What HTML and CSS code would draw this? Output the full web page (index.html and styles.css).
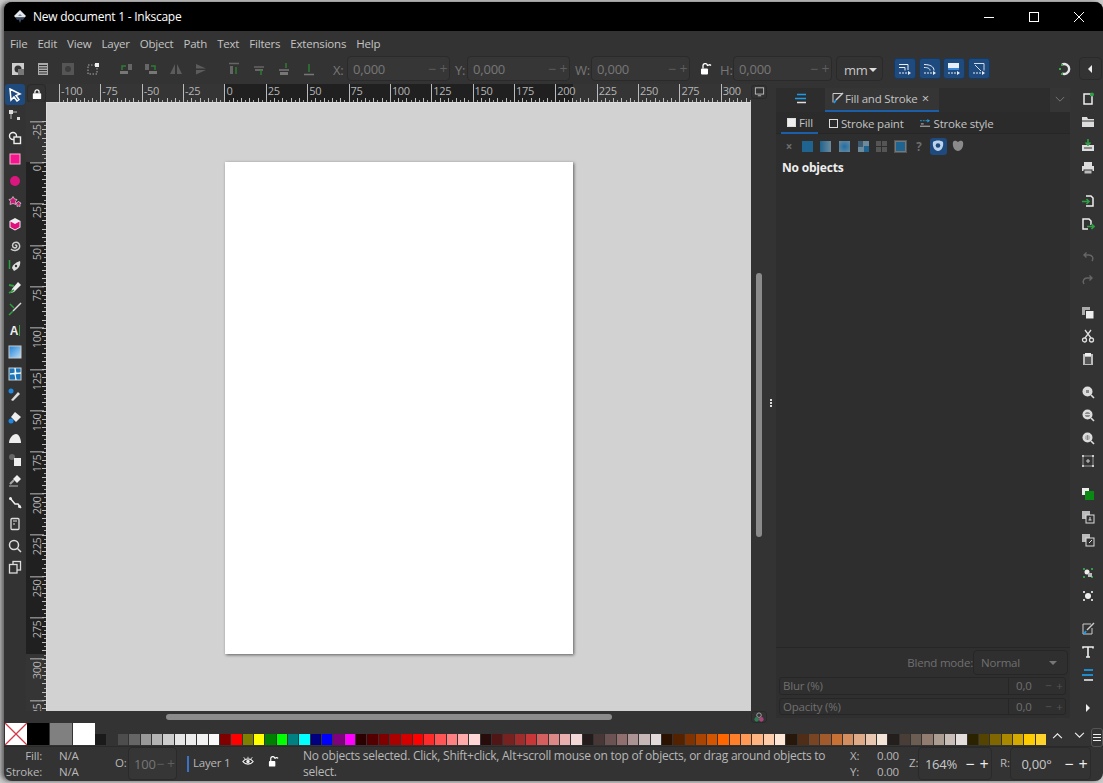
FILE: index.html
```html
<!DOCTYPE html>
<html lang="en">
<head>
    <meta charset="UTF-8">
    <title>New document 1 - Inkscape</title>
    <link rel="stylesheet" href="styles.css">
</head>
<body>
<svg class="defs" width="0" height="0">
    <symbol id="mag" viewBox="0 0 14 14"><circle cx="6.5" cy="6.5" r="5" fill="#ddd"/><circle cx="6.5" cy="6.5" r="2.6" fill="#888"/><path d="M10 10l3 3" stroke="#ddd" stroke-width="1.6"/></symbol>
</svg>
<div class="window">
    <div class="titlebar">
        <svg class="app-logo" viewBox="0 0 14 14" width="14" height="14"><path d="M7 0l6 6-1.500 1.500H2.500L1 6z" fill="#e4e7ec"/><path d="M2.500 7.500h9L10 10l-1.500-.5L7 13l-1.500-3.500L4 10z" fill="#3a4a60"/><path d="M5 6h4L7 4z" fill="#7a8aa0"/></svg>
        <span class="title">New document 1 - Inkscape</span>
        <div class="win-btns">
            <svg viewBox="0 0 12 12" width="12" height="12"><path d="M1 6.500h10" stroke="#fff"/></svg>
            <svg viewBox="0 0 12 12" width="12" height="12"><rect x="1.500" y="1.500" width="9" height="9" fill="none" stroke="#fff"/></svg>
            <svg viewBox="0 0 12 12" width="12" height="12"><path d="M1 1l10 10M11 1L1 11" stroke="#fff"/></svg>
        </div>
    </div>

    <div class="menubar">
        <span>File</span><span>Edit</span><span>View</span><span>Layer</span><span>Object</span><span>Path</span><span>Text</span><span>Filters</span><span>Extensions</span><span>Help</span>
    </div>

    <div class="toolbar">
        <div class="tb-group first">
            <svg viewBox="0 0 14 14"><rect x="1" y="1" width="12" height="12" fill="#ccc"/><circle cx="7" cy="7" r="3.500" fill="#333"/><rect x="7" y="7" width="6" height="6" fill="#777"/></svg>
            <svg viewBox="0 0 14 14"><rect x="2" y="1" width="10" height="12" fill="#aaa"/><path d="M3 3.500h8M3 6h8M3 8.500h8M3 11h8" stroke="#333"/></svg>
            <svg viewBox="0 0 14 14"><rect x="1" y="1" width="12" height="12" fill="#555"/><circle cx="7" cy="7" r="3" fill="#3c3c3c"/></svg>
            <svg viewBox="0 0 14 14"><rect x="2" y="3" width="9" height="9" fill="none" stroke="#aaa" stroke-dasharray="1.500 1.500"/><rect x="9" y="1" width="4" height="4" fill="#eee"/></svg>
        </div>
        <div class="tb-group">
            <svg viewBox="0 0 14 14"><path d="M9 2h4v6H9z" fill="#666"/><path d="M1 9h8v3H1z" fill="#777"/><path d="M3 8V4h4" fill="none" stroke="#2e7d32" stroke-width="1.500"/></svg>
            <svg viewBox="0 0 14 14"><path d="M1 2h4v6H1z" fill="#666"/><path d="M5 9h8v3H5z" fill="#777"/><path d="M11 8V4H7" fill="none" stroke="#2e7d32" stroke-width="1.500"/></svg>
            <svg viewBox="0 0 14 14"><path d="M6 2v10H1zM8 2v10h5z" fill="#5c5c5c"/></svg>
            <svg viewBox="0 0 14 14"><path d="M2 2l10 4.500H2zM2 8h10L2 12.500z" fill="#5c5c5c"/></svg>
        </div>
        <div class="tb-group">
            <svg viewBox="0 0 14 14"><path d="M2 1.500h10" stroke="#666" stroke-width="1.500"/><rect x="3" y="4" width="3" height="8" fill="#666"/><path d="M9 12V5" stroke="#2e7d32" stroke-width="1.500"/></svg>
            <svg viewBox="0 0 14 14"><path d="M2 5h10" stroke="#666" stroke-width="1.500"/><rect x="3" y="7" width="8" height="2" fill="#666"/><path d="M9 13V8" stroke="#2e7d32" stroke-width="1.500"/></svg>
            <svg viewBox="0 0 14 14"><path d="M2 8h10" stroke="#777" stroke-width="1.500"/><rect x="3" y="10" width="8" height="3" fill="#777"/><path d="M9 1v5" stroke="#2e7d32" stroke-width="1.500"/></svg>
            <svg viewBox="0 0 14 14"><path d="M2 12.500h10" stroke="#777" stroke-width="1.500"/><path d="M7 2v8" stroke="#2e7d32" stroke-width="1.500"/></svg>
        </div>
        <label class="coord-x">X:</label><div class="spin w103"><b>0,000</b><i>−</i><i>+</i></div>
        <label class="coord-y">Y:</label><div class="spin w103"><b>0,000</b><i>−</i><i>+</i></div>
        <label class="coord-w">W:</label><div class="spin w99"><b>0,000</b><i>−</i><i>+</i></div>
        <svg class="lock-open" viewBox="0 0 12 12" width="12" height="12"><rect x="1" y="5.500" width="7" height="6" rx="1" fill="#fff"/><path d="M3 5.500V3a2.200 2.200 0 0 1 4.400-.4M7.400 3a2.200 2.200 0 0 1 3.600-.5" fill="none" stroke="#fff" stroke-width="1.300"/></svg>
        <label class="coord-h">H:</label><div class="spin w99"><b>0,000</b><i>−</i><i>+</i></div>
        <div class="unit">mm <span class="caret"></span></div>
        <div class="blue-btns">
            <span><svg viewBox="0 0 14 14"><path d="M1 2.500h9v5.500M1 5.500h6v3" fill="none" stroke="#e6eef8"/><path d="M1 11h9" stroke="#e6eef8" stroke-dasharray="2 1"/><path d="M10 9l3 2-3 2z" fill="#e6eef8"/></svg></span>
            <span><svg viewBox="0 0 14 14"><path d="M1 2.500c6 0 10 2 10 6M1 5.500c4 0 6 1 6 3" fill="none" stroke="#e6eef8"/><path d="M1 11h9" stroke="#e6eef8" stroke-dasharray="2 1"/><path d="M10 9l3 2-3 2z" fill="#e6eef8"/></svg></span>
            <span><svg viewBox="0 0 14 14"><rect x="1" y="1" width="11" height="7" fill="#e6eef8"/><rect x="1" y="6" width="11" height="2" fill="#3f88d8"/><path d="M1 11h9" stroke="#e6eef8" stroke-dasharray="2 1"/><path d="M10 9l3 2-3 2z" fill="#e6eef8"/></svg></span>
            <span><svg viewBox="0 0 14 14"><path d="M2 1.500h10v7M3 3l6 6" fill="none" stroke="#cfdaea"/><path d="M1 11h9" stroke="#e6eef8" stroke-dasharray="2 1"/><path d="M10 9l3 2-3 2z" fill="#e6eef8"/></svg></span>
        </div>
        <svg class="snap-icon" viewBox="0 0 14 14" width="14" height="14"><path d="M4 2.500a5 5 0 1 1 0 9" fill="none" stroke="#e4e4e4" stroke-width="2.400"/><path d="M3 2h2v2H3zM1 6h2v2H1zM3 11h2v2H3z" fill="#39a845"/></svg>
        <div class="more-btn"><span class="arrow-left"></span></div>
    </div>

    <div class="main">
        <div class="tools">
            <span class="active"><svg viewBox="0 0 14 14"><path d="M2 1l10 5-4 1.500 3 4-2 1.500-3-4-3 3z" fill="none" stroke="#fff" stroke-width="1.500"/></svg></span>
            <span><svg viewBox="0 0 14 14"><path d="M3 3h6M3 5v5" stroke="#bbb"/><rect x="1" y="1" width="4" height="4" fill="#ddd"/><rect x="9" y="8" width="3" height="3" fill="#ddd"/></svg></span>
            <span><svg viewBox="0 0 14 14"><circle cx="5" cy="5" r="3.500" fill="none" stroke="#eee" stroke-width="1.400"/><rect x="6" y="6" width="6.500" height="6.500" fill="#333" stroke="#eee" stroke-width="1.400"/></svg></span>
            <span><svg viewBox="0 0 14 14"><rect x="2" y="2" width="10" height="10" fill="#f5168d" stroke="#f7b0d2"/></svg></span>
            <span><svg viewBox="0 0 14 14"><circle cx="7" cy="7" r="5" fill="#d9177f"/></svg></span>
            <span><svg viewBox="0 0 14 14"><path d="M5 1.500l1.500 2.500 2.500.5-1.500 2 .5 3-3-1-3 1 .5-3-1.500-2 2.500-.5z" fill="#c91a78" stroke="#ddd" stroke-width=".7"/><path d="M10.500 6l1 1.500 1.500.5-1 1.500v2l-1.500-.5-1.500.5v-2l-1-1.500 1.500-.5z" fill="#c91a78" stroke="#ddd" stroke-width=".7"/></svg></span>
            <span><svg viewBox="0 0 14 14"><path d="M7 1l5.500 3v6.500L7 13.500 1.500 10.500V4z" fill="#eee"/><path d="M7 7L2.500 4.500V10L7 12.500zM7 7v5.500l4.500-2.500V4.500z" fill="#e0107f"/></svg></span>
            <span><svg viewBox="0 0 14 14"><path d="M7 7.500c1-1 2.500 0 1.500 1.500s-4 1-4-1.500 3-4 5-3 3 4 1.500 6-5.500 3-8 .5" fill="none" stroke="#ccc" stroke-width="1.500"/></svg></span>
            <span><svg viewBox="0 0 14 14"><path d="M12 2c1 3-1 8-6 10L4 9c1-4 5-6 8-7z" fill="#ddd"/><path d="M1.500 1v9" stroke="#2ea043" stroke-width="1.500"/><circle cx="8" cy="7" r="1.200" fill="#333"/></svg></span>
            <span><svg viewBox="0 0 14 14"><path d="M10 1l3 3-7 7-3 1 1-4z" fill="#eee"/><path d="M1 4l5 1M1 12l5-3" stroke="#2ea043" stroke-width="1.800"/></svg></span>
            <span><svg viewBox="0 0 14 14"><path d="M13 1L5 9" stroke="#ddd" stroke-width="1.500"/><path d="M2 2l4 4M1 13l4-4" stroke="#2ea043" stroke-width="1.500"/></svg></span>
            <span class="glyph">A<em></em></span>
            <span><svg viewBox="0 0 14 14"><defs><linearGradient id="gr" x1="0" x2="1" y1="0" y2="1"><stop offset="0" stop-color="#1e7fd8"/><stop offset="1" stop-color="#bfe0f5"/></linearGradient></defs><rect x="1" y="1" width="12" height="12" fill="url(#gr)" stroke="#ccc"/></svg></span>
            <span><svg viewBox="0 0 14 14"><rect x="1" y="1" width="12" height="12" fill="#1b78bd" stroke="#ccc"/><path d="M7 1v5L2 7h5l1 6-1-6 6-1H8z" fill="#fff" stroke="#fff" stroke-width=".8"/></svg></span>
            <span><svg viewBox="0 0 14 14"><circle cx="3" cy="3" r="2.500" fill="#1e88e5"/><path d="M3 12l7-8 2 2-7 7z" fill="#ddd"/></svg></span>
            <span><svg viewBox="0 0 14 14"><path d="M7 2l6 5-5 5-5-5z" fill="#eee"/><circle cx="3" cy="11" r="2.500" fill="#1e88e5"/></svg></span>
            <span><svg viewBox="0 0 14 14"><path d="M1 12c0-5 4-9 7-9s5 5 5 9z" fill="#eee"/></svg></span>
            <span><svg viewBox="0 0 14 14"><circle cx="4" cy="4" r="3" fill="#666"/><rect x="6" y="5" width="7" height="8" fill="#eee"/></svg></span>
            <span><svg viewBox="0 0 14 14"><path d="M9 1l4 4-4 4-4-4z" fill="#eee"/><rect x="1" y="11" width="9" height="2" fill="#777"/><path d="M6 6l-4 4" stroke="#aaa" stroke-width="2"/></svg></span>
            <span><svg viewBox="0 0 14 14"><path d="M2 2l5 6 3 0 3 4" fill="none" stroke="#eee" stroke-width="1.500"/><circle cx="2.500" cy="2.500" r="1.500" fill="#eee"/><circle cx="11.500" cy="10.500" r="1.500" fill="#eee"/></svg></span>
            <span><svg viewBox="0 0 14 14"><rect x="3" y="1.500" width="8" height="11" rx="1" fill="none" stroke="#ddd" stroke-width="1.300"/><path d="M5 4h4M5 7h2" stroke="#ddd"/></svg></span>
            <span><svg viewBox="0 0 14 14"><circle cx="6" cy="6" r="4.500" fill="none" stroke="#ddd" stroke-width="1.500"/><path d="M9.500 9.500l3.500 3.500" stroke="#ddd" stroke-width="1.500"/></svg></span>
            <span><svg viewBox="0 0 14 14"><rect x="5" y="1.500" width="7.500" height="8.500" fill="none" stroke="#ddd" stroke-width="1.300"/><rect x="1.500" y="4.500" width="7.500" height="8.500" fill="#333" stroke="#ddd" stroke-width="1.300"/></svg></span>
        </div>

        <div class="canvas-area">
            <div class="ruler-row">
                <div class="lock-corner"><svg viewBox="0 0 12 12" width="10" height="12"><rect x="1" y="5" width="10" height="7" rx="1" fill="#fff"/><path d="M3.500 5V3.500a2.500 2.500 0 0 1 5 0V5" fill="none" stroke="#fff" stroke-width="1.500"/></svg></div>
                <div class="ruler-h">
                    <span>-100</span><span>-75</span><span>-50</span><span>-25</span><span>0</span><span>25</span><span>50</span><span>75</span><span>100</span><span>125</span><span>150</span><span>175</span><span>200</span><span>225</span><span>250</span><span>275</span><span>300</span>
                </div>
                <div class="mini-btn"><svg viewBox="0 0 12 12" width="11" height="10"><rect x="1" y="1" width="10" height="7.500" fill="none" stroke="#ccc"/><path d="M4 10.500h4" stroke="#ccc"/></svg></div>
            </div>
            <div class="canvas-row">
                <div class="ruler-v">
                    <span>-25</span><span>0</span><span>25</span><span>50</span><span>75</span><span>100</span><span>125</span><span>150</span><span>175</span><span>200</span><span>225</span><span>250</span><span>275</span><span>300</span><span>325</span>
                </div>
                <div class="canvas"><div class="sheet"></div></div>
                <div class="scroll-v"><div class="thumb-v"></div></div>
            </div>
            <div class="hscroll-row">
                <div class="scroll-h"><div class="thumb-h"></div></div>
                <div class="mini-btn color-btn"><svg viewBox="0 0 12 12" width="12" height="11"><circle cx="6" cy="3.500" r="2.500" fill="none" stroke="#aaa"/><circle cx="3.500" cy="8" r="2.500" fill="#2e7d55"/><circle cx="8.500" cy="8" r="2.500" fill="#a8457a"/></svg></div>
            </div>
        </div>

        <div class="grip"><i></i><i></i><i></i></div>

        <div class="dock">
            <div class="dock-tabs">
                <div class="tab-icon"><svg viewBox="0 0 14 12" width="14" height="12"><path d="M3 1.500h9" stroke="#1e9be8" stroke-width="1.600"/><path d="M1 5.500h11" stroke="#1e9be8" stroke-width="1.600"/><path d="M3 9.500h9" stroke="#ddd" stroke-width="1.600"/></svg></div>
                <div class="tab-active">
                    <svg viewBox="0 0 12 12" width="12" height="12"><path d="M10 1.500H1v9" fill="none" stroke="#ccc"/><path d="M11 1L4 8" stroke="#ccc" stroke-width="1.400"/><path d="M4 8l-2 3" stroke="#1e9be8" stroke-width="1.600"/></svg>
                    <span>Fill and Stroke</span><span class="close">×</span>
                </div>
                <div class="tab-menu"><svg viewBox="0 0 12 8" width="10" height="7"><path d="M1 1l5 5 5-5" fill="none" stroke="#777" stroke-width="1.200"/></svg></div>
            </div>
            <div class="sub-tabs">
                <div class="sub active"><span class="sq filled"></span>Fill</div>
                <div class="sub"><span class="sq"></span>Stroke paint</div>
                <div class="sub"><svg viewBox="0 0 12 10" width="11" height="10"><path d="M0 2.500h8" stroke="#2a9be0" stroke-dasharray="2 1"/><path d="M8 .5l3 2-3 2z" fill="#2a9be0"/><path d="M1 6h3" stroke="#ccc"/><path d="M0 8.500h11" stroke="#ccc"/></svg>Stroke style</div>
            </div>
            <div class="paint-row">
                <span class="x-mark">×</span>
                <span class="paint flat"></span>
                <span class="paint linear"></span>
                <span class="paint radial"></span>
                <span class="paint pattern"></span>
                <span class="paint mesh"></span>
                <span class="paint swatch"></span>
                <span class="q-mark">?</span>
                <span class="rule on"><svg viewBox="0 0 12 12" width="12" height="12"><path d="M1 2c2-2 8-2 10 0 1 5-2 9-5 9S0 7 1 2z" fill="#bcd3ec"/><circle cx="6" cy="5.500" r="2.300" fill="#1f4a7d"/></svg></span>
                <span class="rule"><svg viewBox="0 0 12 12" width="12" height="12"><path d="M1 2c2-2 3-1 5 0 2-1 3-2 5 0 1 5-2 9-5 9S0 7 1 2z" fill="#8a8a8a"/></svg></span>
            </div>
            <div class="panel-body"><strong>No objects</strong></div>
            <div class="dock-foot">
                <div class="blend-row"><span>Blend mode:</span><div class="blend-box">Normal<i class="caret dim"></i></div></div>
                <div class="slide"><span>Blur (%)</span><b>0,0</b><i>−</i><i>+</i></div>
                <div class="slide"><span>Opacity (%)</span><b>0,0</b><i>−</i><i>+</i></div>
            </div>
        </div>

        <div class="commands">
            <svg viewBox="0 0 14 14"><path d="M3 2h6l2 2v8H3z" fill="none" stroke="#eee" stroke-width="1.500"/><circle cx="11" cy="2.500" r="2" fill="#2ea043"/></svg>
            <svg viewBox="0 0 14 14"><path d="M1 2h5l1 2h6v8H1z" fill="#ddd"/><path d="M1 6h12" stroke="#333"/></svg>
            <svg viewBox="0 0 14 14"><rect x="1" y="7" width="12" height="6" fill="#ddd"/><path d="M3 10h8" stroke="#333"/><path d="M7 1v6M4.500 4.500L7 7l2.500-2.500" fill="none" stroke="#2ea043" stroke-width="1.600"/></svg>
            <svg class="sep" viewBox="0 0 14 14"><rect x="3" y="1" width="8" height="4" fill="#ddd"/><rect x="1" y="5" width="12" height="5" fill="#ddd"/><rect x="3" y="9" width="8" height="4" fill="#bbb" stroke="#333"/></svg>
            <svg viewBox="0 0 14 14"><path d="M5 2h5l2 2v8H5" fill="none" stroke="#eee" stroke-width="1.500"/><path d="M1 7.500h7M5.500 5L8 7.500 5.500 10" fill="none" stroke="#2ea043" stroke-width="1.600"/></svg>
            <svg class="sep" viewBox="0 0 14 14"><path d="M7 12H2V2h6l2 2v4" fill="none" stroke="#eee" stroke-width="1.500"/><path d="M6 9.500h7M10.500 7L13 9.500 10.500 12" fill="none" stroke="#2ea043" stroke-width="1.600"/></svg>
            <svg viewBox="0 0 14 14"><path d="M11 11c2-3 0-6-3-6H3M5.500 2.500L3 5l2.500 2.500" fill="none" stroke="#666" stroke-width="1.400"/></svg>
            <svg class="sep" viewBox="0 0 14 14"><path d="M3 11C1 8 3 5 6 5h5M8.500 2.500L11 5 8.500 7.500" fill="none" stroke="#666" stroke-width="1.400"/></svg>
            <svg viewBox="0 0 14 14"><rect x="1" y="1" width="8" height="8" fill="#aaa"/><rect x="4.500" y="4.500" width="8.500" height="8.500" fill="#eee" stroke="#333"/></svg>
            <svg viewBox="0 0 14 14"><circle cx="3.500" cy="11" r="2" fill="none" stroke="#ddd" stroke-width="1.300"/><circle cx="10.500" cy="11" r="2" fill="none" stroke="#ddd" stroke-width="1.300"/><path d="M4 9l6-8M10 9L4 1" stroke="#ddd" stroke-width="1.300"/></svg>
            <svg class="sep" viewBox="0 0 14 14"><rect x="2" y="2" width="10" height="11" fill="#bbb"/><rect x="4" y="1" width="6" height="3" fill="#eee"/><rect x="4" y="5" width="6" height="7" fill="#555"/></svg>
            <svg viewBox="0 0 14 14"><use href="#mag"/><rect x="4.500" y="4.500" width="4" height="4" fill="none" stroke="#ddd"/></svg>
            <svg viewBox="0 0 14 14"><use href="#mag"/><path d="M4 6.500h5" stroke="#ddd"/></svg>
            <svg viewBox="0 0 14 14"><use href="#mag"/><rect x="5" y="3.500" width="3" height="6" fill="none" stroke="#ddd"/></svg>
            <svg class="sep" viewBox="0 0 14 14"><rect x="2" y="2" width="10" height="10" fill="none" stroke="#999"/><path d="M1 1h2v2H1zM11 1h2v2h-2zM1 11h2v2H1zM11 11h2v2h-2z" fill="#ccc"/><path d="M7 5v4M5 7h4" stroke="#ccc"/></svg>
            <svg viewBox="0 0 14 14"><rect x="1" y="1" width="7" height="7" fill="#eee"/><rect x="4" y="4" width="9" height="9" fill="#0a8a12"/></svg>
            <svg viewBox="0 0 14 14"><rect x="1" y="1" width="8" height="8" fill="#bbb"/><rect x="5" y="5" width="8" height="8" fill="#333" stroke="#ddd"/><path d="M9 7v3M7.500 10h3" stroke="#ddd"/></svg>
            <svg class="sep" viewBox="0 0 14 14"><rect x="1" y="1" width="8" height="8" fill="#bbb"/><rect x="5" y="5" width="8" height="8" fill="#333" stroke="#ddd"/><path d="M8 10l3-3" stroke="#ddd"/></svg>
            <svg viewBox="0 0 14 14"><path d="M2 2h2v2H2zM10 2h2v2h-2zM2 10h2v2H2zM10 10h2v2h-2z" fill="#2ea043"/><circle cx="6" cy="6" r="2.500" fill="#eee"/><rect x="7" y="7" width="4" height="4" fill="#bbb"/></svg>
            <svg class="sep" viewBox="0 0 14 14"><path d="M2 2h2v2H2zM10 2h2v2h-2zM2 10h2v2H2zM10 10h2v2h-2z" fill="#ccc"/><circle cx="7" cy="7" r="3" fill="#eee"/></svg>
            <svg viewBox="0 0 14 14"><path d="M10 2H2v10h9V6" fill="none" stroke="#ccc"/><path d="M13 1L6 8" stroke="#ccc" stroke-width="1.400"/><path d="M5 9l-2 3" stroke="#1e9be8" stroke-width="1.800"/></svg>
            <svg viewBox="0 0 14 14"><path d="M2 3.500V2h10v1.500M7 2v10M5 12h4" fill="none" stroke="#eee" stroke-width="1.600"/></svg>
            <svg class="sep" viewBox="0 0 14 14"><path d="M3 2h9" stroke="#1e9be8" stroke-width="1.700"/><path d="M1 7h11" stroke="#1e9be8" stroke-width="1.700"/><path d="M3 12h9" stroke="#ddd" stroke-width="1.700"/></svg>
            <span class="arrow-right"></span>
        </div>
    </div>

    <div class="palette-row">
        <div class="big none"><svg viewBox="0 0 22 22" preserveAspectRatio="none"><path d="M0 0l22 22M22 0L0 22" stroke="#d2384b" stroke-width="1.300"/></svg></div>
        <div class="big" style="background:#000"></div>
        <div class="big" style="background:#808080"></div>
        <div class="big" style="background:#fff"></div>
        <div class="swatches">
            <i style="background:#1a1a1a"></i><i style="background:#333"></i><i style="background:#4d4d4d"></i><i style="background:#666"></i><i style="background:#999"></i><i style="background:#b3b3b3"></i><i style="background:#ccc"></i><i style="background:#e6e6e6"></i><i style="background:#ececec"></i><i style="background:#f2f2f2"></i><i style="background:#f9f9f9"></i>
            <i style="background:#800000"></i><i style="background:#f00"></i><i style="background:#808000"></i><i style="background:#ff0"></i><i style="background:#008000"></i><i style="background:#0f0"></i><i style="background:#008080"></i><i style="background:#0ff"></i><i style="background:#000080"></i><i style="background:#00f"></i><i style="background:#800080"></i><i style="background:#f0f"></i>
            <i style="background:#2b0000"></i><i style="background:#500"></i><i style="background:#800000"></i><i style="background:#a00"></i><i style="background:#d40000"></i><i style="background:#f00"></i><i style="background:#ff2a2a"></i><i style="background:#f55"></i><i style="background:#ff8080"></i><i style="background:#faa"></i><i style="background:#ffd5d5"></i>
            <i style="background:#280b0b"></i><i style="background:#501616"></i><i style="background:#782121"></i><i style="background:#a02c2c"></i><i style="background:#c83737"></i><i style="background:#d35f5f"></i><i style="background:#de8787"></i><i style="background:#e9afaf"></i><i style="background:#f4d7d7"></i>
            <i style="background:#241c1c"></i><i style="background:#483737"></i><i style="background:#6c5353"></i><i style="background:#916f6f"></i><i style="background:#ac9393"></i><i style="background:#c8b7b7"></i><i style="background:#e3dbdb"></i>
            <i style="background:#2b1100"></i><i style="background:#520"></i><i style="background:#803300"></i><i style="background:#a40"></i><i style="background:#d45500"></i><i style="background:#f60"></i><i style="background:#ff7f2a"></i><i style="background:#f95"></i><i style="background:#ffb380"></i><i style="background:#fca"></i><i style="background:#ffe6d5"></i>
            <i style="background:#28170b"></i><i style="background:#502d16"></i><i style="background:#784421"></i><i style="background:#a05a2c"></i><i style="background:#c87137"></i><i style="background:#d38d5f"></i><i style="background:#deaa87"></i><i style="background:#e9c6af"></i><i style="background:#f4e3d7"></i>
            <i style="background:#241f1c"></i><i style="background:#483e37"></i><i style="background:#6c5d53"></i><i style="background:#917c6f"></i><i style="background:#ac9d93"></i><i style="background:#c8beb7"></i><i style="background:#e3dedb"></i>
            <i style="background:#2b2200"></i><i style="background:#540"></i><i style="background:#806600"></i><i style="background:#a80"></i><i style="background:#d4aa00"></i><i style="background:#fc0"></i><i style="background:#ffd42a"></i>
        </div>
        <div class="pal-ctrl">
            <svg viewBox="0 0 12 8" width="11" height="7"><path d="M1 7l5-5 5 5" fill="none" stroke="#eee" stroke-width="1.300"/></svg>
            <svg viewBox="0 0 12 8" width="11" height="7"><path d="M1 1l5 5 5-5" fill="none" stroke="#eee" stroke-width="1.300"/></svg>
            <div class="pal-menu"><i></i><i></i><i></i></div>
        </div>
    </div>

    <div class="statusbar">
        <div class="fs-labels"><span>Fill:</span><span>Stroke:</span></div>
        <div class="fs-values"><span>N/A</span><span>N/A</span></div>
        <label class="op-label">O:</label>
        <div class="spin op"><b>100</b><i>−</i><i>+</i></div>
        <div class="layer-bar"></div>
        <span class="layer-name">Layer 1</span>
        <svg class="eye" viewBox="0 0 14 12" width="12" height="11"><path d="M1 6c3-4 9-4 12 0-3 4-9 4-12 0z" fill="none" stroke="#eee" stroke-width="1.400"/><circle cx="7" cy="6" r="2" fill="#eee"/><path d="M2 1l1.500 2M12 1l-1.500 2M7 .5V2" stroke="#eee"/></svg>
        <svg class="lock-small" viewBox="0 0 12 12" width="11" height="11"><rect x="1" y="5.500" width="7" height="6" rx="1" fill="#fff"/><path d="M3 5.500V3a2.200 2.200 0 0 1 4.400-.4M7.400 3a2.200 2.200 0 0 1 3.600-.5" fill="none" stroke="#fff" stroke-width="1.300"/></svg>
        <p class="message">No objects selected. Click, Shift+click, Alt+scroll mouse on top of objects, or drag around objects to select.</p>
        <div class="xy-labels"><span>X:</span><span>Y:</span></div>
        <div class="xy-values"><span>0.00</span><span>0.00</span></div>
        <label class="z-label">Z:</label>
        <div class="stat-spin zoom"><b>164%</b><i>−</i><i>+</i></div>
        <label class="r-label">R:</label>
        <div class="stat-spin rot"><b>0,00°</b><i>−</i><i>+</i></div>
    </div>
</div>
</body>
</html>
```

FILE: styles.css
```css
* {
    box-sizing: border-box;
}

body {
    margin: 0;
    height: 783px;
    overflow: hidden;
    background-color: #c9c9c9;
    font-family: "Open Sans", "Noto Sans", sans-serif;
    font-size: 11.5px;
    letter-spacing: -0.2px;
    color: #c8c8c8;
}

.defs {
    position: absolute;
}

.window {
    margin: 2px 0 0 4px;
    width: 1099px;
    height: 779px;
    background-color: #333;
    border-radius: 8px;
    overflow: hidden;
    display: flex;
    flex-direction: column;
    box-shadow: -3px 0 4px rgba(0, 0, 0, 0.5);
}

/* title bar */
.titlebar {
    height: 29px;
    background-color: #000;
    display: flex;
    align-items: center;
    padding-left: 9px;
    flex: none;
}

.app-logo {
    margin-right: 6px;
}

.title {
    color: #fff;
    font-size: 12px;
    letter-spacing: -0.25px;
}

.win-btns {
    margin-left: auto;
    display: flex;
    gap: 33px;
    padding-right: 18px;
}

/* menu */
.menubar {
    height: 25px;
    display: flex;
    align-items: center;
    padding-left: 6px;
    gap: 10px;
    flex: none;
    color: #c4c4c4;
}

/* toolbar */
.toolbar {
    height: 28px;
    display: flex;
    flex: none;
    align-items: flex-start;
    color: #777;
}

.tb-group {
    display: flex;
    gap: 11px;
    padding: 6px 10px 0 9px;
    height: 24px;
}

.tb-group.first {
    padding-left: 7px;
}

.tb-group svg {
    width: 14px;
    height: 14px;
}

.toolbar label {
    padding-top: 5px;
    font-size: 13px;
}

.coord-x {
    margin-left: 7px;
    width: 14px;
}

.coord-y {
    margin-left: 5px;
    width: 12px;
}

.coord-w {
    margin-left: 5px;
    width: 16px;
}

.coord-h {
    width: 13px;
}

.spin {
    height: 25px;
    border: 1px solid #2a2a2a;
    border-radius: 4px;
    background-color: #363636;
    display: flex;
    align-items: center;
    padding-left: 5px;
    color: #777;
    font-size: 13px;
}

.spin b {
    font-weight: normal;
    flex: 1;
}

.spin i {
    font-style: normal;
    width: 11px;
    text-align: center;
    color: #5e5e5e;
    font-size: 14px;
}

.w103 {
    width: 103px;
}

.w99 {
    width: 99px;
}

.lock-open {
    margin: 7px 8px 0 10px;
}

.unit {
    width: 47px;
    height: 25px;
    margin-left: 4px;
    border: 1px solid #2a2a2a;
    border-radius: 4px;
    color: #c8c8c8;
    font-size: 13px;
    padding: 3px 0 0 7px;
    display: flex;
    align-items: center;
    gap: 1px;
}

.caret {
    display: inline-block;
    width: 0;
    height: 0;
    border-left: 4px solid transparent;
    border-right: 4px solid transparent;
    border-top: 4px solid #ddd;
}

.caret.dim {
    border-top-color: #777;
    margin-left: auto;
}

.blue-btns {
    display: flex;
    gap: 2.5px;
    margin: 2px 0 0 11px;
}

.blue-btns span {
    width: 22px;
    height: 21px;
    background-color: #1f4a7d;
    border: 1px solid #173a63;
    border-radius: 3px;
    display: flex;
    align-items: center;
    justify-content: center;
}

.blue-btns svg {
    width: 14px;
    height: 14px;
}

.snap-icon {
    margin: 6px 0 0 68px;
}

.more-btn {
    width: 23px;
    height: 23px;
    margin: 1px 0 0 7px;
    border: 1px solid #2a2a2a;
    border-radius: 4px;
    display: flex;
    align-items: center;
    justify-content: center;
}

.arrow-left {
    border-top: 4px solid transparent;
    border-bottom: 4px solid transparent;
    border-right: 4px solid #eee;
}

.arrow-right {
    display: block;
    width: 0;
    border-top: 4px solid transparent;
    border-bottom: 4px solid transparent;
    border-left: 4px solid #eee;
}

/* main area */
.main {
    height: 638px;
    flex: none;
    display: flex;
}

.tools {
    width: 22px;
    flex: none;
    display: flex;
    flex-direction: column;
}

.tools span {
    height: 21.48px;
    display: flex;
    align-items: center;
    justify-content: center;
    flex: none;
    border-radius: 3px;
}

.tools span.active {
    background-color: #1f4a7d;
    margin-left: 1px;
    width: 20px;
}

.tools svg {
    width: 14px;
    height: 14px;
}

.tools .glyph {
    font-family: "Liberation Sans", sans-serif;
    font-weight: bold;
    font-size: 12px;
    color: #eee;
    gap: 1px;
}

.glyph em {
    width: 1px;
    height: 11px;
    background-color: #2ea043;
}

.canvas-area {
    width: 739px;
    flex: none;
    display: flex;
    flex-direction: column;
}

.ruler-row {
    height: 19px;
    display: flex;
    flex: none;
}

.lock-corner {
    width: 19px;
    margin-left: 1px;
    height: 19px;
    flex: none;
    border: 1px solid #2a2a2a;
    border-radius: 4px;
    display: flex;
    align-items: center;
    justify-content: center;
}

/* the dark band is the page width, ticks every 2.5mm */
.ruler-h {
    width: 705px;
    flex: none;
    overflow: hidden;
    display: flex;
    padding-left: 13px;
    font-size: 11px;
    line-height: 14px;
    color: #b4b4b4;
    border-bottom: 1px solid #ddd;
    background:
        repeating-linear-gradient(90deg, #bbb 0 1px, transparent 1px 8.272px) 13px 100% / 100% 4px no-repeat,
        repeating-linear-gradient(90deg, #aaa 0 1px, transparent 1px 4.136px) 13px 100% / 100% 2px no-repeat,
        linear-gradient(#202020, #202020) 179px 0 / 348px 100% no-repeat,
        #353535;
}

.ruler-h span {
    flex: 0 0 41.36px;
    border-left: 1px solid #bbb;
    padding-left: 1px;
    letter-spacing: -0.3px;
}

.mini-btn {
    width: 16px;
    height: 14px;
    flex: none;
    margin-top: 1px;
    border: 1px solid #2a2a2a;
    border-radius: 3px;
    display: flex;
    align-items: center;
    justify-content: center;
}

.canvas-row {
    height: 608px;
    display: flex;
    flex: none;
}

.ruler-v {
    width: 21px;
    flex: none;
    overflow: hidden;
    padding: 18.6px 0 0 4px;
    margin-top: -1px;
    display: flex;
    flex-direction: column;
    font-size: 11px;
    color: #b4b4b4;
    border-right: 1px solid #ddd;
    background:
        repeating-linear-gradient(180deg, #bbb 0 1px, transparent 1px 8.272px) 100% 18.6px / 4px 100% no-repeat,
        repeating-linear-gradient(180deg, #aaa 0 1px, transparent 1px 4.136px) 100% 18.6px / 2px 100% no-repeat,
        linear-gradient(#202020, #202020) 0 60px / 100% 492px no-repeat,
        #353535;
}

.ruler-v span {
    flex: 0 0 41.36px;
    writing-mode: vertical-rl;
    transform: rotate(180deg);
    line-height: 14px;
    width: 14px;
    padding-bottom: 2px;
    text-align: end;
    letter-spacing: -0.3px;
    border-bottom: 1px solid #bbb;
}

.canvas {
    width: 704px;
    flex: none;
    background-color: #d2d2d2;
    padding: 59px 0 0 178px;
}

.sheet {
    width: 348px;
    height: 492px;
    background-color: #fff;
    box-shadow: 1px 1px 3px rgba(0, 0, 0, 0.55);
}

.scroll-v {
    width: 14px;
    flex: none;
    padding: 170px 0 0 5px;
}

.thumb-v {
    width: 6px;
    height: 264px;
    background-color: #8b8b8b;
    border-radius: 3px;
}

.hscroll-row {
    display: flex;
    height: 12px;
    flex: none;
}

.scroll-h {
    width: 725px;
    flex: none;
    padding: 3px 0 0 140px;
}

.thumb-h {
    width: 446px;
    height: 6px;
    background-color: #8b8b8b;
    border-radius: 3px;
}

.color-btn {
    margin: 0;
    height: 12px;
}

.grip {
    width: 11px;
    flex: none;
    display: flex;
    flex-direction: column;
    align-items: center;
    justify-content: center;
    gap: 1px;
}

.grip i {
    width: 2px;
    height: 2px;
    background-color: #ddd;
}

/* fill and stroke dock */
.dock {
    width: 294px;
    flex: none;
    margin-top: 4px;
    display: flex;
    flex-direction: column;
    background-color: #2e2e2e;
    height: 630px;
}

.dock-tabs {
    height: 24px;
    display: flex;
    flex: none;
    background-color: #2d2d2d;
}

.tab-icon {
    width: 48px;
    padding: 5px 0 0 18px;
}

.tab-active {
    width: 114px;
    margin-left: 1px;
    display: flex;
    align-items: center;
    gap: 1px;
    padding: 0 0 2px 7px;
    border-bottom: 2px solid #1a5fa8;
    height: 24px;
    background-color: #353535;
    color: #c4c4c4;
}

.tab-active .close {
    margin-left: 3px;
    font-size: 13px;
}

.tab-menu {
    margin-left: auto;
    width: 20px;
    background-color: #353535;
    text-align: center;
    padding-top: 3px;
}

.sub-tabs {
    height: 22px;
    display: flex;
    flex: none;
    gap: 16px;
    padding-left: 5px;
    background-color: #2b2b2b;
    border-bottom: 1px solid #262626;
    color: #c4c4c4;
}

.sub {
    display: flex;
    align-items: center;
    gap: 3px;
    height: 22px;
}

.sub.active {
    border-bottom: 2px solid #1a5fa8;
    width: 37px;
    padding: 1px 0 0 6px;
    margin-right: -5px;
}

.sq {
    width: 9px;
    height: 9px;
    border: 1px solid #ddd;
}

.sq.filled {
    background-color: #eee;
}

.paint-row {
    height: 24px;
    display: flex;
    align-items: center;
    padding-left: 8px;
    gap: 7.7px;
    flex: none;
}

.x-mark,
.q-mark {
    width: 10px;
    text-align: center;
    color: #6e6e6e;
    font-weight: bold;
}

.paint {
    width: 11px;
    height: 11px;
}

.flat {
    background-color: #1f6390;
}

.linear {
    background: linear-gradient(90deg, #1f6390, #6d8a9c);
}

.radial {
    background: radial-gradient(circle, #1f6ea8, #6d8a9c);
}

.pattern {
    background: conic-gradient(#6d8a9c 25%, #1f6390 0 50%, #6d8a9c 0 75%, #3c5a70 0);
}

.mesh {
    background-color: #555;
    background-image:
        linear-gradient(#2e2e2e, #2e2e2e),
        linear-gradient(#2e2e2e, #2e2e2e);
    background-size: 1px 100%, 100% 1px;
    background-position: 5px 0, 0 5px;
    background-repeat: no-repeat;
}

.swatch {
    background-color: #1f6390;
    border: 1px solid #777;
    outline: 1px solid #555;
}

.rule {
    width: 17px;
    height: 17px;
    margin-left: -3px;
    display: flex;
    align-items: center;
    justify-content: center;
    border-radius: 3px;
}

.rule.on {
    background-color: #1f4a7d;
    margin-left: -2px;
    margin-right: -2px;
}

.panel-body {
    flex: 1;
    padding: 1px 6px;
    border-bottom: 1px solid #262626;
    color: #eee;
    font-size: 12px;
}

.dock-foot {
    height: 70px;
    flex: none;
    background-color: #2f2f2f;
    padding: 2px 2px 0 3px;
    display: flex;
    flex-direction: column;
    color: #6f6f6f;
}

.blend-row {
    display: flex;
    justify-content: flex-end;
    align-items: center;
    gap: 0;
    margin-bottom: 2px;
    height: 25px;
}

.blend-box {
    width: 95px;
    height: 25px;
    padding: 0 10px 0 7px;
    border: 1px solid #262626;
    border-radius: 4px;
    display: flex;
    align-items: center;
}

.slide {
    height: 18px;
    margin: 0 2px 3px 0;
    border: 1px solid #262626;
    border-radius: 3px;
    display: flex;
    align-items: center;
    padding-left: 3px;
}

.slide span {
    width: 226px;
    border-right: 1px solid #262626;
    height: 100%;
}

.slide b {
    font-weight: normal;
    margin-left: 7px;
    flex: 1;
}

.slide i {
    font-style: normal;
    width: 11px;
    text-align: center;
    color: #555;
}

.commands {
    width: 30px;
    flex: none;
    padding: 8px 0 0 11px;
    display: flex;
    flex-direction: column;
}

.commands svg {
    width: 14px;
    height: 14px;
    margin-bottom: 9px;
    flex: none;
}

.commands svg.sep {
    margin-bottom: 19px;
}

.commands .arrow-right {
    margin: 3px 0 0 5px;
}

/* palette */
.palette-row {
    height: 25px;
    flex: none;
    display: flex;
    align-items: flex-end;
    padding: 0 0 1px 0.7px;
    gap: 0.7px;
    border-bottom: 1px solid #2a2a2a;
}

.big {
    width: 22px;
    height: 22px;
    flex: none;
}

.big.none {
    background-color: #fff;
}

.big.none svg {
    display: block;
    width: 100%;
    height: 100%;
}

.swatches {
    display: flex;
    height: 11px;
    flex: none;
}

.swatches i {
    width: 11.33px;
    flex: none;
    border-right: 1px solid #333;
}

.pal-ctrl {
    display: flex;
    align-items: flex-start;
    align-self: flex-start;
    gap: 11px;
    margin-left: 4px;
    padding-top: 10px;
    flex: none;
}

.pal-menu {
    width: 12px;
    height: 19px;
    margin: -4px 0 0 -5px;
    border: 1px solid #555;
    border-radius: 3px;
    display: flex;
    flex-direction: column;
    justify-content: center;
    gap: 2px;
    padding: 0 1px;
}

.pal-menu i {
    height: 1px;
    background-color: #eee;
}

/* status bar */
.statusbar {
    flex: 1;
    display: flex;
    align-items: stretch;
    color: #b8b8b8;
}

.fs-labels,
.fs-values,
.xy-labels,
.xy-values {
    display: flex;
    flex-direction: column;
    padding-top: 1px;
    line-height: 16px;
}

.fs-labels {
    width: 38px;
    text-align: right;
}

.fs-values {
    margin-left: 17px;
    width: 56px;
}

.op-label {
    width: 13px;
    padding-top: 8px;
}

.spin.op {
    width: 49px;
    height: 33px;
}

.layer-bar {
    width: 2px;
    height: 16px;
    margin: 9px 0 0 10px;
    background-color: #3a72c4;
}

.layer-name {
    margin-left: 4px;
    padding-top: 8px;
    width: 49px;
}

.eye {
    margin: 9px 14px 0 0;
}

.lock-small {
    margin-top: 9px;
}

.message {
    margin: 1px 0 0 24px;
    width: 547px;
    line-height: 16px;
    flex: none;
    font-size: 12px;
    letter-spacing: -0.25px;
}

.xy-labels {
    width: 28px;
}

.xy-values {
    width: 21px;
    text-align: right;
    align-items: flex-end;
    margin-right: 10px;
}

.z-label {
    padding-top: 8px;
    width: 9px;
}

.stat-spin {
    height: 33px;
    border: 1px solid #2a2a2a;
    border-radius: 4px;
    display: flex;
    align-items: center;
    color: #c8c8c8;
    font-size: 13px;
}

.stat-spin b {
    font-weight: normal;
    flex: 1;
    text-align: center;
}

.stat-spin i {
    font-style: normal;
    width: 14px;
    text-align: center;
    color: #eee;
    font-size: 16px;
}

.zoom {
    width: 74px;
}

.r-label {
    margin-left: 8px;
    padding-top: 8px;
    width: 10px;
}

.rot {
    width: 81px;
}
```
